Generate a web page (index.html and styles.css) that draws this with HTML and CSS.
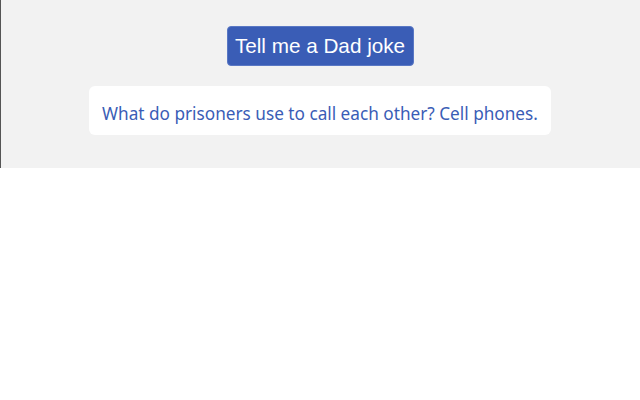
FILE: index.html
```html
<!DOCTYPE html>
<html>
<head>
<meta charset="utf-8">
<link rel="stylesheet" href="styles.css">
</head>
<body>
<div class="app">
  <button class="joke-btn">Tell me a Dad joke</button>
  <div class="joke-box">What do prisoners use to call each other? Cell phones.</div>
</div>
</body>
</html>
```
FILE: styles.css
```css
html, body {
  margin: 0;
  padding: 0;
  background: #ffffff;
}
.app {
  height: 168px;
  box-sizing: border-box;
  background: #f2f2f2;
  border-left: 1px solid #555;
  display: flex;
  flex-direction: column;
  align-items: center;
  padding-top: 26px;
  gap: 20px;
}
.joke-btn {
  width: 187px;
  height: 40px;
  background: #3a5db6;
  color: #ffffff;
  border: 1px solid #5a78c4;
  border-radius: 4px;
  font-family: "Liberation Sans", Arial, sans-serif;
  font-size: 20.7px;
  padding: 0;
  margin-left: -1px;
}
.joke-box {
  width: 462px;
  height: 49px;
  box-sizing: border-box;
  padding-top: 5px;
  background: #ffffff;
  border-radius: 6px;
  color: #3a5db6;
  font-family: "Noto Sans", sans-serif;
  font-size: 17.2px;
  display: flex;
  align-items: center;
  justify-content: center;
  margin-left: -1px;
}
```
